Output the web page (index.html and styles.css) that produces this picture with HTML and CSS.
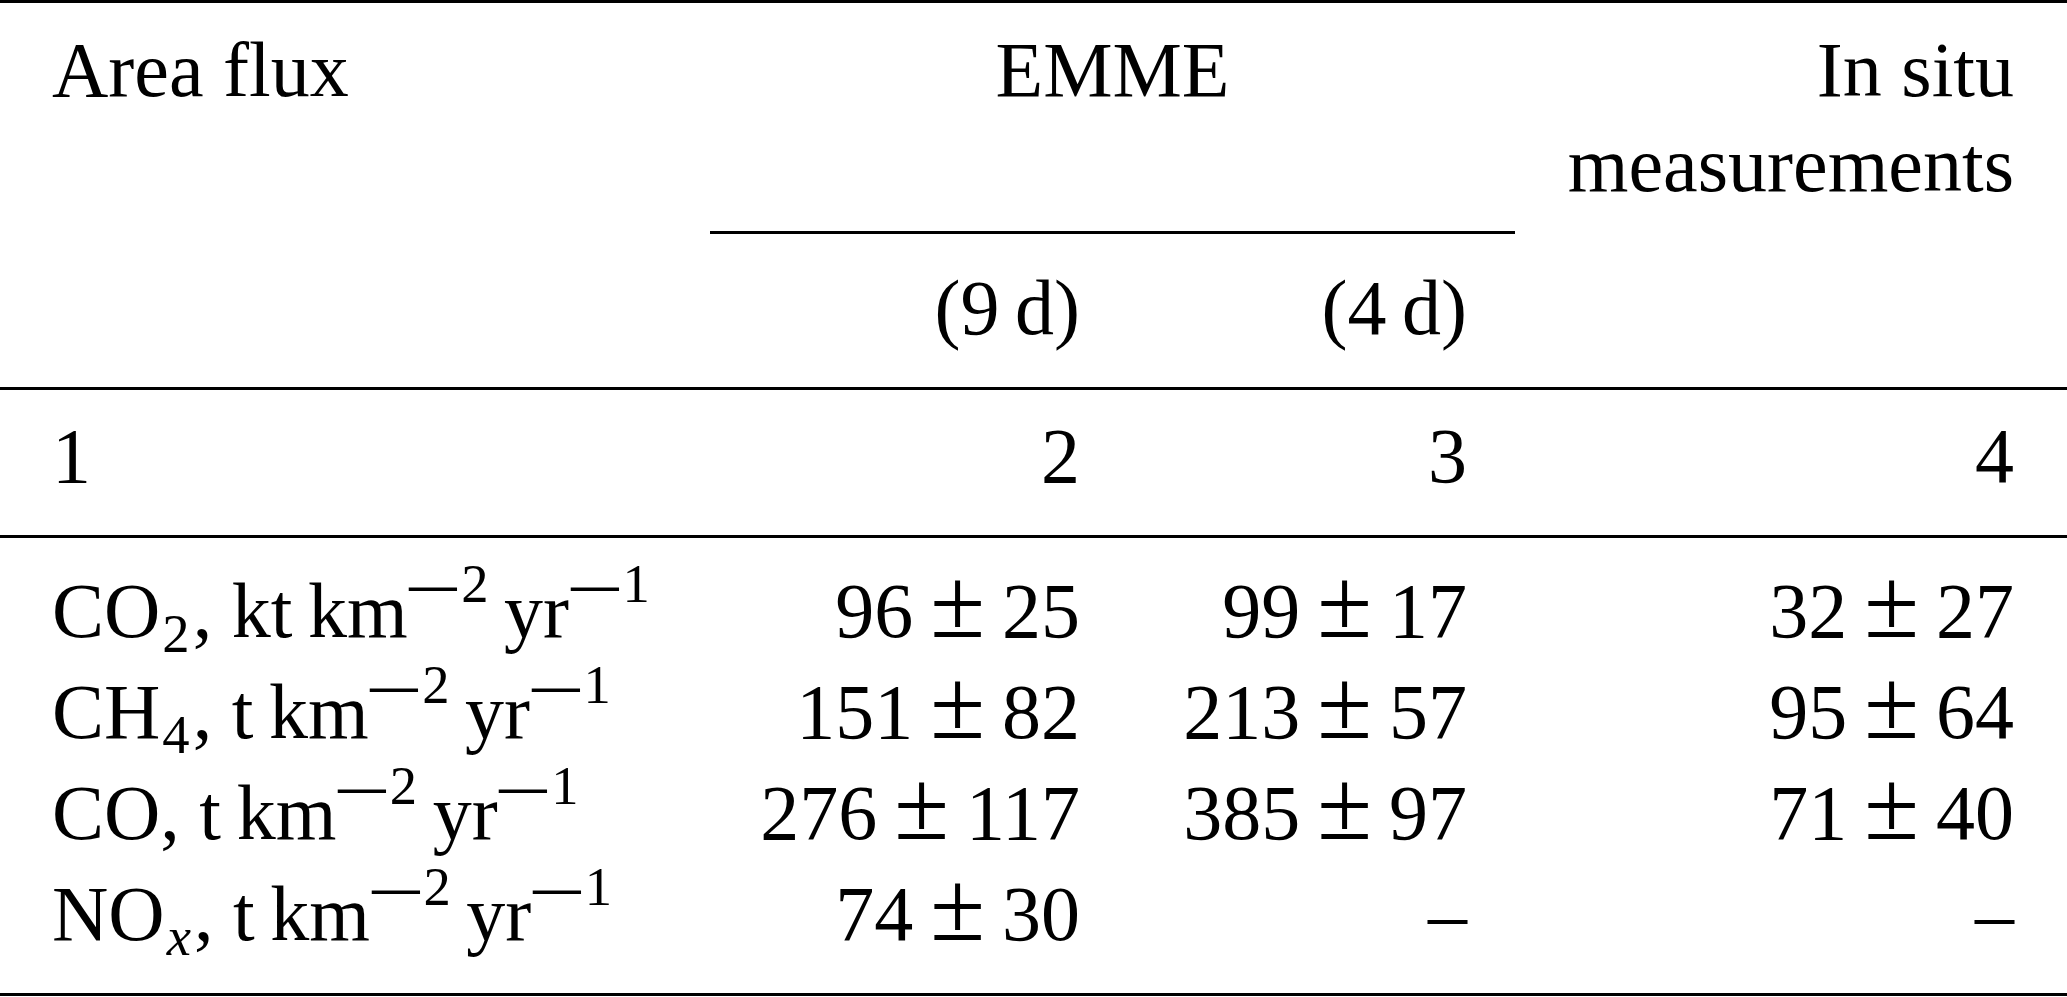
FILE: index.html
```html
<!DOCTYPE html>
<html lang="en">
<head>
    <meta charset="UTF-8">
    <meta name="viewport" content="width=device-width, initial-scale=1.0">
    <title>Area flux: EMME and in situ measurements</title>
    <link rel="stylesheet" href="styles.css">
</head>
<body>
    <table class="flux">
        <colgroup>
            <col class="col-name">
            <col class="col-nine">
            <col class="col-four">
            <col class="col-situ">
        </colgroup>
        <thead>
            <tr class="head-main">
                <th>Area flux</th>
                <th class="emme" colspan="2">EMME</th>
                <th>In situ<br>measurements</th>
            </tr>
            <tr class="head-sub">
                <th></th>
                <th>(9&thinsp;d)</th>
                <th>(4&thinsp;d)</th>
                <th></th>
            </tr>
            <tr class="head-num">
                <th>1</th>
                <th>2</th>
                <th>3</th>
                <th>4</th>
            </tr>
        </thead>
        <tbody>
            <tr>
                <td>CO<sub>2</sub>, kt&thinsp;km<sup><span class="neg">−</span>2</sup>&thinsp;yr<sup><span class="neg">−</span>1</sup></td>
                <td>96<span class="pm">±</span>25</td>
                <td>99<span class="pm">±</span>17</td>
                <td>32<span class="pm">±</span>27</td>
            </tr>
            <tr>
                <td>CH<sub>4</sub>, t&thinsp;km<sup><span class="neg">−</span>2</sup>&thinsp;yr<sup><span class="neg">−</span>1</sup></td>
                <td>151<span class="pm">±</span>82</td>
                <td>213<span class="pm">±</span>57</td>
                <td>95<span class="pm">±</span>64</td>
            </tr>
            <tr>
                <td>CO, t&thinsp;km<sup><span class="neg">−</span>2</sup>&thinsp;yr<sup><span class="neg">−</span>1</sup></td>
                <td>276<span class="pm">±</span>117</td>
                <td>385<span class="pm">±</span>97</td>
                <td>71<span class="pm">±</span>40</td>
            </tr>
            <tr>
                <td>NO<sub><i>x</i></sub>, t&thinsp;km<sup><span class="neg">−</span>2</sup>&thinsp;yr<sup><span class="neg">−</span>1</sup></td>
                <td>74<span class="pm">±</span>30</td>
                <td>–</td>
                <td>–</td>
            </tr>
        </tbody>
    </table>
</body>
</html>
```

FILE: styles.css
```css
* {
    margin: 0;
    padding: 0;
}
body {
    background-color: #fff;
}
table.flux {
    width: 2067px;
    table-layout: fixed;
    border-collapse: separate;
    border-spacing: 0;
    font-family: "Liberation Serif", "Times New Roman", serif;
    font-size: 78px;
    color: #000;
}
col.col-name {
    width: 710px;
}
col.col-nine {
    width: 418px;
}
col.col-four {
    width: 387px;
}
col.col-situ {
    width: 552px;
}
table.flux th,
table.flux td {
    font-weight: normal;
    text-align: right;
    vertical-align: top;
    white-space: nowrap;
    padding-left: 48px;
    padding-right: 48px;
}
table.flux th:first-child,
table.flux td:first-child {
    text-align: left;
    padding-left: 52px;
}
table.flux th:last-child,
table.flux td:last-child {
    padding-right: 53px;
}

/* header rows */
tr.head-main th {
    line-height: 95px;
    padding-top: 19px;
    padding-bottom: 19px;
    border-top: 3px solid #000;
    border-bottom: 3px solid transparent;
}
tr.head-main th.emme {
    text-align: center;
    border-bottom-color: #000;
}
tr.head-sub th {
    line-height: 95px;
    padding-top: 26px;
    padding-bottom: 32px;
    border-bottom: 3px solid #000;
}
tr.head-num th {
    line-height: 95px;
    padding-top: 18px;
    padding-bottom: 32px;
    border-bottom: 3px solid #000;
}

/* data rows */
tbody td {
    line-height: 101px;
}
tbody tr:first-child td {
    padding-top: 22px;
}
tbody tr:last-child td {
    padding-bottom: 29px;
    border-bottom: 3px solid #000;
}
sup,
sub {
    font-size: 0.7em;
    line-height: 0;
}
sup {
    vertical-align: 0.64em;
    margin-left: 2px;
}
sub {
    vertical-align: -0.27em;
    margin-left: 2px;
    margin-right: 3px;
}
/* the minus of an exponent is drawn wider, like a math minus */
span.neg {
    display: inline-block;
    line-height: 1;
    transform: scale(1.9, 1.3);
    vertical-align: -0.11em;
    margin: 0 0.24em 0 0.14em;
}
span.pm {
    font-size: 1.28em;
    line-height: 0;
    margin: 0 0.17em;
}
```
